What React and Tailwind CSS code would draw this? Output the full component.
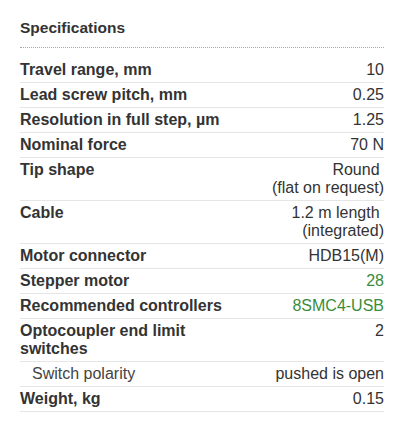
import React from "react";

const rows = [
  { label: "Travel range, mm", value: "10" },
  { label: "Lead screw pitch, mm", value: "0.25" },
  { label: "Resolution in full step, µm", value: "1.25" },
  { label: "Nominal force", value: "70 N" },
  { label: "Tip shape", value: ["Round\u00a0", "(flat on request)"] },
  { label: "Cable", value: ["1.2 m length\u00a0", "(integrated)"] },
  { label: "Motor connector", value: "HDB15(M)" },
  { label: "Stepper motor", value: "28", link: true },
  { label: "Recommended controllers", value: "8SMC4-USB", link: true },
  { label: "Optocoupler end limit switches", value: "2" },
  { label: "Switch polarity", value: "pushed is open", sub: true },
  { label: "Weight, kg", value: "0.15" },
];

function App() {
  return (
    <div className="min-h-[424px] bg-white font-['Liberation_Sans',Arial,sans-serif] text-[#333]">
      <div className="ml-[20px] w-[364px] pt-[19px]">
        <h2 className="border-b border-dotted border-[#a8a8a8] pb-[10px] text-[15.5px] font-bold leading-[18px]">
          Specifications
        </h2>
        <div className="mt-[10px]">
          {rows.map((r) => (
            <div
              key={r.label}
              className="flex border-b border-[#e6e6e6] py-[3px] text-[16px] leading-[18px]"
            >
              <div
                className={
                  r.sub
                    ? "w-[222px] shrink-0 pl-[12px] font-normal text-[#444]"
                    : "w-[222px] shrink-0 font-bold"
                }
              >
                {r.label}
              </div>
              <div
                className={
                  r.link
                    ? "flex-1 text-right text-[#3a8c3a]"
                    : "flex-1 text-right"
                }
              >
                {Array.isArray(r.value)
                  ? r.value.map((v) => <div key={v}>{v}</div>)
                  : r.value}
              </div>
            </div>
          ))}
        </div>
      </div>
    </div>
  );
}

export default App;
